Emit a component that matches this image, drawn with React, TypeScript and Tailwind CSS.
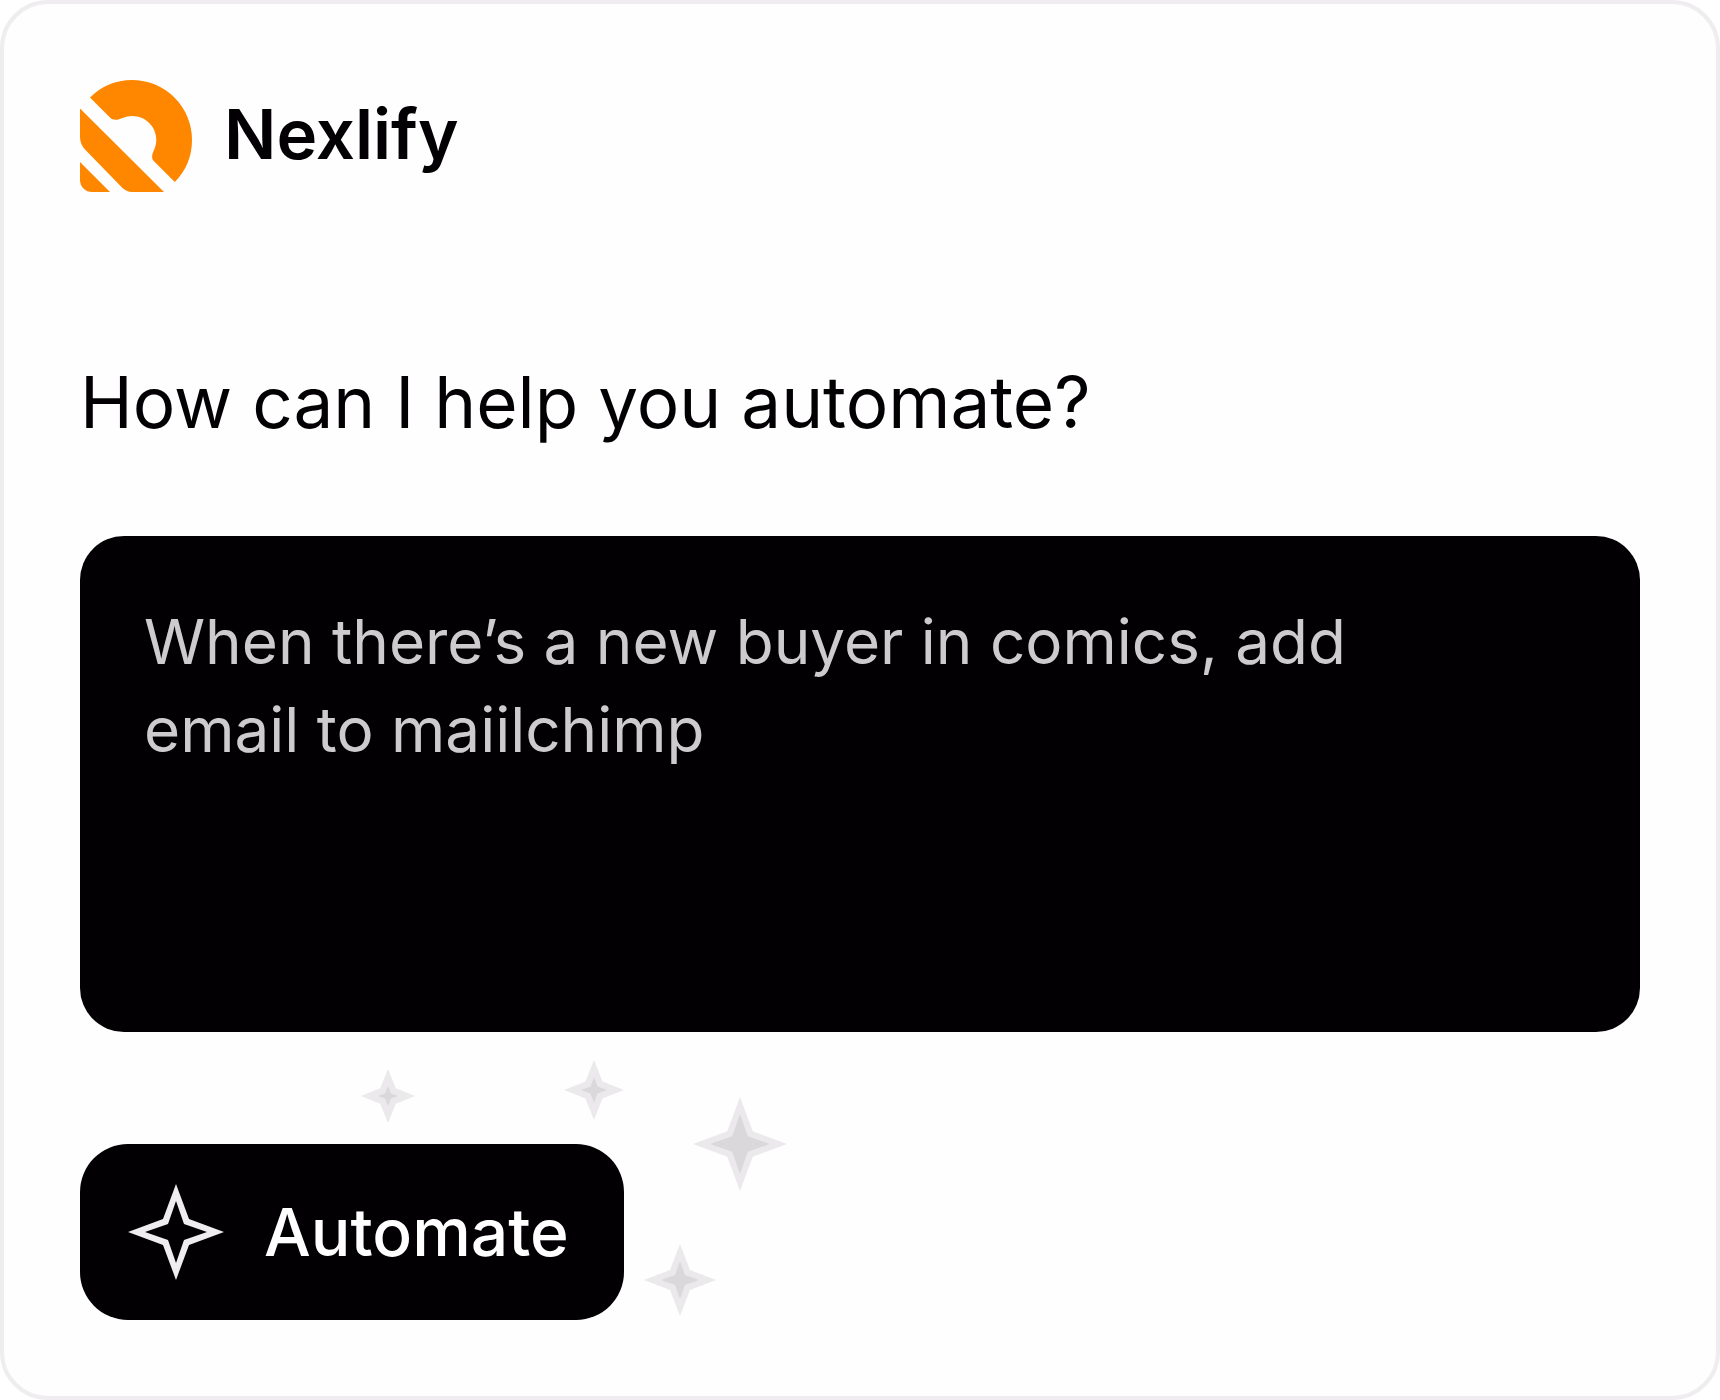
import { useState } from "react";

type SparkleProps = {
  size: number;
  className: string;
};

// Four-pointed star: `tip` is the reach of the points, `waist` the inner corners
const starPoints = (c: number, tip: number, waist: number) =>
  [
    [c, c - tip],
    [c + waist, c - waist],
    [c + tip, c],
    [c + waist, c + waist],
    [c, c + tip],
    [c - waist, c + waist],
    [c - tip, c],
    [c - waist, c - waist],
  ]
    .map((p) => p.join(","))
    .join(" ");

function Sparkle({ size, className }: SparkleProps) {
  const c = size / 2;
  return (
    <svg width={size} height={size} viewBox={`0 0 ${size} ${size}`} className={className} aria-hidden="true">
      <polygon points={starPoints(c, c, c / 4 + 1)} fill="#ebe9eb" />
      <polygon points={starPoints(c, c - 17, c / 4 - 4)} fill="#dad8da" />
    </svg>
  );
}

function Logo() {
  return (
    <svg viewBox="0 0 112 112" className="size-28 shrink-0" fill="#ff8700" aria-hidden="true">
      <path d="M10 17.5A60 60 0 0 1 52 0A60 60 0 0 1 112 60A60 60 0 0 1 94.8 102L74 81.2C71.5 78.7 71.8 75.5 73.3 71.5A24 24 0 0 0 42.5 38L39 39.2C35 40.5 32 39.5 30 37.5Z" />
      <path d="M0 28.5L84 112H52C48 112 45 110.3 42.5 108L5.5 70C2 66.5 0 62 0 57Z" />
      <path d="M0 82L30 112H12A12 12 0 0 1 0 100Z" />
    </svg>
  );
}

export default function App() {
  const [prompt, setPrompt] = useState("");

  return (
    <main className="min-h-screen flex flex-col items-start rounded-[48px] border-4 border-[#efedef] bg-[#fefefe] p-[76px] font-['Inter',sans-serif] text-[#020003]">
      <header className="flex items-center gap-8">
        <Logo />
        <span className="pb-1 text-[69px] leading-[76px] font-semibold">Nexlify</span>
      </header>

      <label htmlFor="prompt" className="mt-40 text-[71px] leading-[100px]">
        How can I help you automate?
      </label>

      <textarea
        id="prompt"
        value={prompt}
        onChange={(e) => setPrompt(e.target.value)}
        placeholder="When there’s a new buyer in comics, add email to maiilchimp"
        className="mt-[84px] h-[496px] w-full resize-none rounded-[44px] bg-[#020003] py-[62px] pl-16 pr-48 text-[62px] leading-[88px] text-[#cecbce] placeholder:text-[#cecbce] outline-none"
      />

      <div className="relative mt-28">
        <button
          type="button"
          className="flex h-44 items-center gap-10 rounded-[48px] bg-[#020003] pl-12 pr-[55px] text-[66px] font-medium text-white"
        >
          <svg viewBox="0 0 96 96" className="size-24 shrink-0" aria-hidden="true">
            <polygon points={starPoints(48, 48, 13)} fill="#efedef" />
            <polygon points={starPoints(48, 31, 8)} fill="#020003" />
          </svg>
          Automate
        </button>
        <Sparkle size={54} className="absolute left-[281px] -top-[75px]" />
        <Sparkle size={60} className="absolute left-[484px] -top-[84px]" />
        <Sparkle size={94} className="absolute left-[613px] -top-[47px]" />
        <Sparkle size={72} className="absolute left-[564px] top-[100px]" />
      </div>
    </main>
  );
}
